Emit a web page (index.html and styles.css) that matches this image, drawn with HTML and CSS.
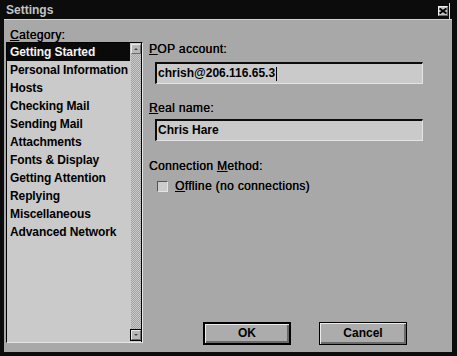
FILE: index.html
```html
<!DOCTYPE html>
<html>
<head>
<meta charset="utf-8">
<link rel="stylesheet" href="styles.css">
</head>
<body>
<div class="window">
  <div class="titlebar">
    <span class="title">Settings</span>
    <span class="close"><svg width="8" height="6" viewBox="0 0 8 6"><path d="M0.5 0.5 L7.5 5.5 M7.5 0.5 L0.5 5.5" stroke="#000" stroke-width="2"/></svg></span>
    <span class="edge"></span>
  </div>
  <div class="body">
    <div class="leftcol">
      <div class="label"><u>C</u>ategory:</div>
      <div class="list">
        <div class="items">
          <div class="item sel">Getting Started</div>
          <div class="item">Personal Information</div>
          <div class="item">Hosts</div>
          <div class="item">Checking Mail</div>
          <div class="item">Sending Mail</div>
          <div class="item">Attachments</div>
          <div class="item">Fonts &amp; Display</div>
          <div class="item">Getting Attention</div>
          <div class="item">Replying</div>
          <div class="item">Miscellaneous</div>
          <div class="item">Advanced Network</div>
        </div>
        <div class="scrollbar">
          <div class="arrow"><svg width="8" height="8" viewBox="0 0 8 8"><path d="M2 5 L6 5 L4 3 Z" fill="#444"/></svg></div>
          <div class="track"></div>
          <div class="arrow down"><svg width="8" height="8" viewBox="0 0 8 8"><path d="M2 3 L6 3 L4 5 Z" fill="#444"/></svg></div>
        </div>
      </div>
    </div>
    <div class="rightcol">
      <div class="label l-pop"><u>P</u>OP account:</div>
      <div class="field f-pop">chrish@206.116.65.3<span class="caret"></span></div>
      <div class="label l-real"><u>R</u>eal name:</div>
      <div class="field f-real">Chris Hare</div>
      <div class="label l-conn">Connection <u>M</u>ethod:</div>
      <div class="check-row">
        <span class="checkbox"></span>
        <span class="check-label"><u>O</u>ffline (no connections)</span>
      </div>
      <div class="buttons">
        <div class="btn default">OK</div>
        <div class="btn">Cancel</div>
      </div>
    </div>
  </div>
</div>
</body>
</html>
```
FILE: styles.css
```css
* { box-sizing: border-box; }
html, body { margin: 0; padding: 0; background: #0c0c0c; }
body {
  font-family: "Liberation Sans", Arial, sans-serif;
  font-size: 12px;
  color: #000;
}
.window {
  width: 457px;
  height: 356px;
  background: #0c0c0c;
  display: flex;
  flex-direction: column;
  padding: 0 5px 4px 4px;
}
.titlebar {
  height: 19px;
  display: flex;
  align-items: flex-start;
}
.title {
  color: #c4c4c4;
  font-weight: bold;
  font-size: 12px;
  line-height: 14px;
  margin-top: 3px;
  margin-left: 2px;
}
.close {
  margin-left: auto;
  margin-top: 6px;
  width: 10px;
  height: 10px;
  background: #c4c4c4;
  border-top: 1px solid #f0f0f0;
  border-left: 1px solid #f0f0f0;
  border-right: 1px solid #6a6a6a;
  border-bottom: 1px solid #6a6a6a;
  display: flex;
  align-items: center;
  justify-content: center;
}
.edge {
  width: 1px;
  height: 16px;
  margin-top: 3px;
  margin-left: 1px;
  margin-right: 2px;
  background: #d8d8d8;
}
.body {
  flex: 1;
  background: #a8a8a8;
  border-top: 1px solid #d4d4d4;
  display: flex;
  padding: 8px 0 9px 2px;
}
.leftcol {
  width: 137px;
  display: flex;
  flex-direction: column;
}
.label {
  height: 14px;
  line-height: 14px;
  white-space: nowrap;
  letter-spacing: 0.35px;
  text-shadow: 0.25px 0 0 #000;
}
.leftcol .label { margin-left: 4px; }
.list {
  flex: 1;
  display: flex;
  border-top: 1px solid #000;
  border-left: 1px solid #000;
  border-right: 1px solid #e6e6e6;
  border-bottom: 1px solid #e6e6e6;
  background: #cacaca;
}
.items {
  flex: 1;
  display: flex;
  flex-direction: column;
}
.item {
  height: 18px;
  line-height: 18px;
  padding-left: 3px;
  font-weight: bold;
  white-space: nowrap;
  letter-spacing: -0.1px;
}
.item.sel {
  background: #0a0a0a;
  color: #f4f4f4;
}
.scrollbar {
  width: 12px;
  display: flex;
  flex-direction: column;
  border-right: 1px solid #000;
  padding: 1px 0 0 1px;
}
.arrow {
  width: 10px;
  height: 10px;
  background: #b8b8b8;
  border-top: 1px solid #e8e8e8;
  border-left: 1px solid #e8e8e8;
  border-right: 1px solid #6c6c6c;
  border-bottom: 1px solid #6c6c6c;
  display: flex;
  align-items: center;
  justify-content: center;
}
.arrow.down {
  outline: 1px solid #000;
  margin-bottom: 2px;
}
.track {
  flex: 1;
  background: repeating-conic-gradient(#c8c8c8 0 25%, #a4a4a4 0 50%) 0 0 / 2px 2px;
}
.rightcol {
  flex: 1;
  display: flex;
  flex-direction: column;
  margin-left: 6px;
}
.l-pop { margin-top: 14px; }
.field {
  margin-left: 6px;
  width: 268px;
  height: 22px;
  background: #cacaca;
  border-top: 2px solid #0c0c0c;
  border-left: 2px solid #0c0c0c;
  border-right: 1px solid #e4e4e4;
  border-bottom: 1px solid #e4e4e4;
  font-weight: bold;
  line-height: 19px;
  padding-left: 1px;
  display: flex;
  align-items: center;
  white-space: nowrap;
}
.f-pop { margin-top: 6px; }
.caret {
  display: inline-block;
  width: 1px;
  height: 14px;
  background: #000;
  margin-left: 1px;
}
.l-real { margin-top: 17px; }
.f-real { margin-top: 4px; }
.l-conn { margin-top: 18px; }
.check-row {
  margin-top: 6px;
  height: 14px;
  display: flex;
  align-items: center;
  margin-left: 8px;
}
.checkbox {
  width: 11px;
  height: 11px;
  background: #cccccc;
  border-top: 1px solid #555;
  border-left: 1px solid #555;
  border-right: 1px solid #e4e4e4;
  border-bottom: 1px solid #e4e4e4;
}
.check-label {
  margin-left: 7px;
  line-height: 14px;
  letter-spacing: 0.35px;
  text-shadow: 0.25px 0 0 #000;
}
.buttons {
  margin-top: auto;
  margin-bottom: -2px;
  margin-left: 54px;
  display: flex;
  gap: 28px;
}
.btn {
  width: 88px;
  height: 23px;
  border: 1px solid #000;
  background: #acacac;
  box-shadow: inset 1px 1px 0 #ececec, inset -2px -2px 0 #6a6a6a;
  font-weight: bold;
  text-align: center;
  line-height: 20px;
}
.btn.default {
  border-width: 2px;
  line-height: 18px;
}
```
